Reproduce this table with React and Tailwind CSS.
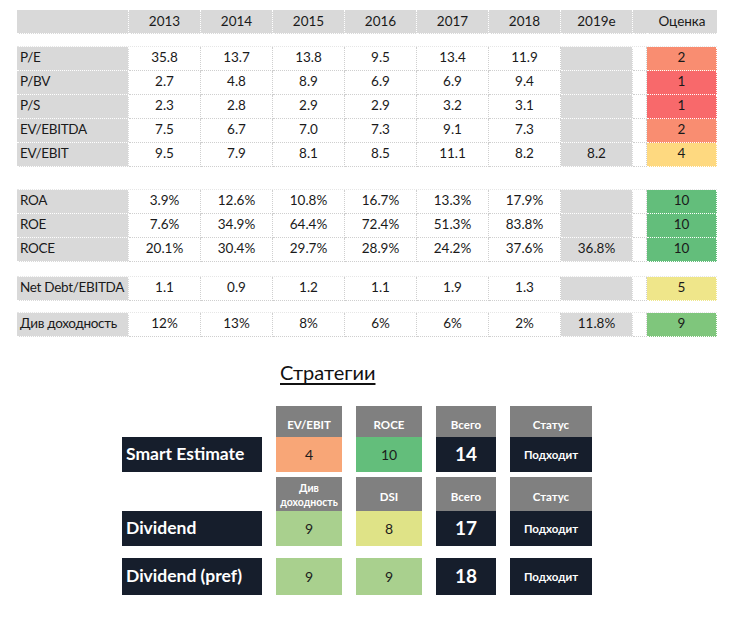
import React from 'react'

const font = { fontFamily: 'Lato, "Noto Sans", "Liberation Sans", sans-serif' }

const years = ['2013', '2014', '2015', '2016', '2017', '2018']

const groups = [
  {
    gap: 'h-[13px]',
    rows: [
      ['P/E', ['35.8', '13.7', '13.8', '9.5', '13.4', '11.9'], '', '2', 'bg-[#f98d71]'],
      ['P/BV', ['2.7', '4.8', '8.9', '6.9', '6.9', '9.4'], '', '1', 'bg-[#f8696b]'],
      ['P/S', ['2.3', '2.8', '2.9', '2.9', '3.2', '3.1'], '', '1', 'bg-[#f8696b]'],
      ['EV/EBITDA', ['7.5', '6.7', '7.0', '7.3', '9.1', '7.3'], '', '2', 'bg-[#f98d71]'],
      ['EV/EBIT', ['9.5', '7.9', '8.1', '8.5', '11.1', '8.2'], '8.2', '4', 'bg-[#fed980]'],
    ],
  },
  {
    gap: 'h-[23px]',
    rows: [
      ['ROA', ['3.9%', '12.6%', '10.8%', '16.7%', '13.3%', '17.9%'], '', '10', 'bg-[#63be7b]'],
      ['ROE', ['7.6%', '34.9%', '64.4%', '72.4%', '51.3%', '83.8%'], '', '10', 'bg-[#63be7b]'],
      ['ROCE', ['20.1%', '30.4%', '29.7%', '28.9%', '24.2%', '37.6%'], '36.8%', '10', 'bg-[#63be7b]'],
    ],
  },
  {
    gap: 'h-[15px]',
    rows: [['Net Debt/EBITDA', ['1.1', '0.9', '1.2', '1.1', '1.9', '1.3'], '', '5', 'bg-[#efe68a]']],
  },
  {
    gap: 'h-[12px]',
    rows: [['Див доходность', ['12%', '13%', '8%', '6%', '6%', '2%'], '11.8%', '9', 'bg-[#7fc67c]']],
  },
]

const grid = 'grid grid-cols-[112px_repeat(7,72px)_14px_70px]'
const cell = 'h-[24px] flex items-end pb-[3px] border-r border-b border-dotted'

function MetricRow({ label, values, est, score, color }) {
  return (
    <div className={grid}>
      <div className={`${cell} bg-[#d9d9d9] border-white pl-[3px] whitespace-nowrap overflow-hidden tracking-[-0.3px]`}>{label}</div>
      {values.map((v, i) => (
        <div key={i} className={`${cell} justify-center border-[#cfcfcf]`}>{v}</div>
      ))}
      <div className={`${cell} justify-center bg-[#d9d9d9] border-white pb-[1px]`}>{est}</div>
      <div className={`${cell} border-[#cfcfcf]`} />
      <div className={`${cell} justify-center border-white ${color}`}>{score}</div>
    </div>
  )
}

function Head({ children, tall }) {
  return (
    <div className={`bg-[#808080] text-white font-bold flex items-center justify-center text-center ${tall ? 'text-[10.5px] leading-[14px] pt-[1px]' : 'text-[11.5px] pt-[6px]'}`}>
      {children}
    </div>
  )
}

function Val({ children, color }) {
  return <div className={`${color} flex items-center justify-center text-[14px] text-[#1c1c1c]`}>{children}</div>
}

function Dark({ children, big }) {
  return (
    <div className={`bg-[#161e2c] text-white font-bold flex items-center justify-center ${big ? 'text-[19px]' : 'text-[11.5px]'}`}>
      {children}
    </div>
  )
}

function Label({ children }) {
  return <div className="bg-[#161e2c] text-white font-bold text-[17.5px] flex items-center pl-[4px] whitespace-nowrap">{children}</div>
}

const sGrid = 'grid grid-cols-[140px_66px_66px_60px_82px] gap-x-[14px]'

export default function App() {
  return (
    <div className="w-[736px] h-[622px] bg-white pl-[17px] pt-[10px] text-[13.5px] text-[#1a1a1a]" style={font}>
      <div className={grid}>
        <div className="h-[24px] bg-[#d9d9d9] border-r border-b border-dotted border-white" />
        {[...years, '2019e'].map((y) => (
          <div key={y} className="h-[24px] bg-[#d9d9d9] flex items-center justify-center border-r border-b border-dotted border-white">{y}</div>
        ))}
        <div className="h-[24px] bg-[#d9d9d9] border-b border-dotted border-white" />
        <div className="h-[24px] bg-[#d9d9d9] flex items-center justify-center border-b border-dotted border-white">Оценка</div>
      </div>

      {groups.map((g, gi) => (
        <div key={gi}>
          <div className={`${g.gap} w-[700px] border-b border-dotted border-[#e6e6e6]`} />
          {g.rows.map((r) => (
            <MetricRow key={r[0]} label={r[0]} values={r[1]} est={r[2]} score={r[3]} color={r[4]} />
          ))}
        </div>
      ))}

      <div className="ml-[263px] mt-[23px] text-[20px] leading-[24px] text-[#111] underline underline-offset-[3px] decoration-[1.5px]">
        Стратегии
      </div>

      <div className="ml-[105px] mt-[22px]">
        <div className={`${sGrid} h-[31px]`}>
          <div />
          <Head>EV/EBIT</Head>
          <Head>ROCE</Head>
          <Head>Всего</Head>
          <Head>Статус</Head>
        </div>
        <div className={`${sGrid} h-[35px]`}>
          <Label>Smart Estimate</Label>
          <Val color="bg-[#f8a677]">4</Val>
          <Val color="bg-[#63be7b]">10</Val>
          <Dark big>14</Dark>
          <Dark>Подходит</Dark>
        </div>

        <div className={`${sGrid} h-[34px] mt-[5px]`}>
          <div />
          <Head tall>Див<br />доходность</Head>
          <Head>DSI</Head>
          <Head>Всего</Head>
          <Head>Статус</Head>
        </div>
        <div className={`${sGrid} h-[35px]`}>
          <Label>Dividend</Label>
          <Val color="bg-[#a9d08e]">9</Val>
          <Val color="bg-[#dfe387]">8</Val>
          <Dark big>17</Dark>
          <Dark>Подходит</Dark>
        </div>

        <div className={`${sGrid} h-[37px] mt-[12px]`}>
          <Label>Dividend (pref)</Label>
          <Val color="bg-[#a9d08e]">9</Val>
          <Val color="bg-[#a9d08e]">9</Val>
          <Dark big>18</Dark>
          <Dark>Подходит</Dark>
        </div>
      </div>
    </div>
  )
}
